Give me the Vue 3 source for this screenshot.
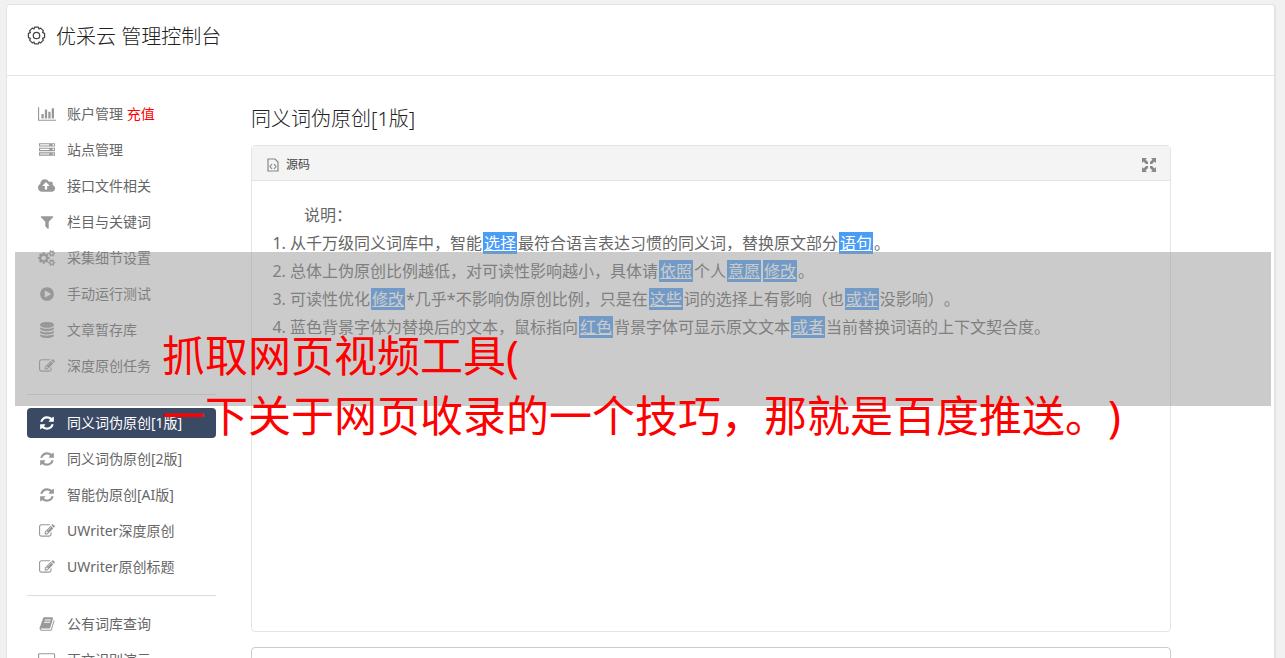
<script setup>
const icons = {
  chart: { w: 2048, d: 'M640 896v512h-256v-512h256zm384-512v1024h-256v-1024h256zm1024 1152v128h-2048v-1536h128v1408h1920zm-640-896v768h-256v-768h256zm384-384v1152h-256v-1152h256z' },
  server: { w: 1792, d: 'M128 1408h1024v-128h-1024v128zm0-512h1024v-128h-1024v128zm1568 448q0-40-28-68t-68-28-68 28-28 68 28 68 68 28 68-28 28-68zm-1568-960h1024v-128h-1024v128zm1568 448q0-40-28-68t-68-28-68 28-28 68 28 68 68 28 68-28 28-68zm0-512q0-40-28-68t-68-28-68 28-28 68 28 68 68 28 68-28 28-68zm96 832v384h-1792v-384h1792zm0-512v384h-1792v-384h1792zm0-512v384h-1792v-384h1792z' },
  cloud: { w: 1920, d: 'M1280 864q0-14-9-23l-352-352q-9-9-23-9t-23 9l-351 351q-10 12-10 24 0 14 9 23t23 9h224v352q0 13 9.5 22.5t22.5 9.5h192q13 0 22.5-9.5t9.5-22.5v-352h224q13 0 22.5-9.5t9.5-22.5zm640 288q0 159-112.5 271.5t-271.5 112.5h-1088q-185 0-316.5-131.5t-131.5-316.5q0-130 70-240t188-165q-2-30-2-43 0-212 150-362t362-150q156 0 285.5 87t188.5 231q71-62 166-62 106 0 181 75t75 181q0 76-41 138 130 31 213.5 135.5t83.5 238.5z' },
  filter: { w: 1792, d: 'M1595 295q17 41-14 70l-493 493v742q0 42-39 59-13 5-25 5-27 0-45-19l-256-256q-19-19-19-45v-486l-493-493q-31-29-14-70 17-39 59-39h1280q42 0 59 39z' },
  cogs: { w: 1920, d: 'M896 896q0-106-75-181t-181-75-181 75-75 181 75 181 181 75 181-75 75-181zm768 512q0-52-38-90t-90-38-90 38-38 90q0 53 37.5 90.5t90.5 37.5 90.5-37.5 37.5-90.5zm0-1024q0-52-38-90t-90-38-90 38-38 90q0 53 37.5 90.5t90.5 37.5 90.5-37.5 37.5-90.5zm-384 421v185q0 10-7 19.5t-16 10.5l-155 24q-11 35-32 76 34 48 90 115 7 11 7 20 0 12-7 19-23 30-82.5 89.5t-78.5 59.5q-11 0-21-7l-115-90q-37 19-77 31-11 108-23 155-7 24-30 24h-186q-11 0-20-7.5t-10-17.5l-23-153q-34-10-75-31l-118 89q-7 7-20 7-11 0-21-8-144-133-144-160 0-9 7-19 10-14 41-53t47-61q-23-44-35-82l-152-24q-10-1-17-9.500t-7-19.500v-185q0-10 7-19.500t16-10.500l155-24q11-35 32-76-34-48-90-115-7-11-7-20 0-12 7-20 22-30 82-89t79-59q11 0 21 7l115 90q34-18 77-32 11-108 23-154 7-24 30-24h186q11 0 20 7.500t10 17.500l23 153q34 10 75 31l118-89q8-7 20-7 11 0 21 8 144 133 144 160 0 8-7 19-12 16-42 54t-45 60q23 48 34 82l152 23q10 2 17 10.500t7 19.500zm640 533v140q0 16-149 31-12 27-30 52 51 113 51 138 0 4-4 7-122 71-124 71-8 0-46-47t-52-68q-20 2-30 2t-30-2q-14 21-52 68t-46 47q-2 0-124-71-4-3-4-7 0-25 51-138-18-25-30-52-149-15-149-31v-140q0-16 149-31 13-29 30-52-51-113-51-138 0-4 4-7 4-2 35-20t59-34 30-16q8 0 46 46.500t52 67.500q20-2 30-2t30 2q51-71 92-112l6-2q4 0 124 70 4 3 4 7 0 25-51 138 17 23 30 52 149 15 149 31zm0-1024v140q0 16-149 31-12 27-30 52 51 113 51 138 0 4-4 7-122 71-124 71-8 0-46-47t-52-68q-20 2-30 2t-30-2q-14 21-52 68t-46 47q-2 0-124-71-4-3-4-7 0-25 51-138-18-25-30-52-149-15-149-31v-140q0-16 149-31 13-29 30-52-51-113-51-138 0-4 4-7 4-2 35-20t59-34 30-16q8 0 46 46.500t52 67.500q20-2 30-2t30 2q51-71 92-112l6-2q4 0 124 70 4 3 4 7 0 25-51 138 17 23 30 52 149 15 149 31z' },
  play: { w: 1792, d: 'M896 128q209 0 385.500 103t279.500 279.500 103 385.500-103 385.500-279.500 279.500-385.500 103-385.500-103-279.500-279.500-103-385.500 103-385.500 279.500-279.500 385.500-103zm384 823q32-18 32-55t-32-55l-544-320q-31-19-64-1-32 19-32 56v640q0 37 32 56 16 8 32 8 17 0 32-9z' },
  database: { w: 1792, d: 'M896 768q237 0 443-43t325-127v170q0 69-103 128t-280 93.500-385 34.500-385-34.500-280-93.500-103-128v-170q119 84 325 127t443 43zm0 768q237 0 443-43t325-127v170q0 69-103 128t-280 93.500-385 34.500-385-34.500-280-93.500-103-128v-170q119 84 325 127t443 43zm0-384q237 0 443-43t325-127v170q0 69-103 128t-280 93.500-385 34.500-385-34.500-280-93.500-103-128v-170q119 84 325 127t443 43zm0-1152q208 0 385 34.500t280 93.500 103 128v128q0 69-103 128t-280 93.500-385 34.500-385-34.500-280-93.500-103-128v-128q0-69 103-128t280-93.500 385-34.500z' },
  edit: { w: 1792, d: 'M888 1184l116-116-152-152-116 116v56h96v96h56zm440-720q-16-16-33 1l-350 350q-17 17-1 33t33-1l350-350q17-17 1-33zm80 594v190q0 119-84.500 203.500t-203.500 84.500h-832q-119 0-203.500-84.500t-84.500-203.500v-832q0-119 84.500-203.500t203.500-84.500h832q63 0 117 25 15 7 18 23 3 17-9 29l-49 49q-14 14-32 8-23-6-45-6h-832q-66 0-113 47t-47 113v832q0 66 47 113t113 47h832q66 0 113-47t47-113v-126q0-13 9-22l64-64q15-15 35-7t20 29zm-96-738l288 288-672 672h-288v-288zm444 132l-92 92-288-288 92-92q28-28 68-28t68 28l152 152q28 28 28 68t-28 68z' },
  refresh: { w: 1792, d: 'M1639 1056q0 5-1 7-64 268-268 434.500t-478 166.500q-146 0-282.500-55t-243.500-157l-129 129q-19 19-45 19t-45-19-19-45v-448q0-26 19-45t45-19h448q26 0 45 19t19 45-19 45l-137 137q71 66 161 102t187 36q134 0 250-65t186-179q11-17 53-117 8-23 30-23h192q13 0 22.500 9.500t9.500 22.500zm25-800v448q0 26-19 45t-45 19h-448q-26 0-45-19t-19-45 19-45l138-138q-148-137-349-137-134 0-250 65t-186 179q-11 17-53 117-8 23-30 23h-199q-13 0-22.500-9.500t-9.500-22.500v-7q65-268 270-434.500t480-166.500q146 0 284 55.500t245 156.500l130-129q19-19 45-19t45 19 19 45z' },
  book: { w: 1792, d: 'M1703 478q40 57 18 129l-275 906q-19 64-76.500 107.500t-122.500 43.500h-923q-77 0-148.500-53.500t-99.500-131.500q-24-67-2-127 0-4 3-27t4-37q1-8-3-21.500t-3-19.500q2-11 8-21t16.500-23.500 16.500-23.500q23-38 45-91.500t30-91.500q3-10 .5-30t-.5-28q3-11 17-28t17-23q21-36 42-92t25-90q1-9-2.500-32t.5-28q4-13 22-30.500t22-22.500q19-26 42.500-84.500t27.500-96.500q1-8-3-25.500t-2-26.500q2-8 9-18t18-23 17-21q8-12 16.500-30.500t15-35 16-36 19.500-32 26.500-23.500 36-11.500 47.500 5.500l-1 3q38-9 51-9h761q74 0 114 56t18 130l-274 906q-36 119-71.500 153.500t-128.500 34.500h-869q-27 0-38 15-11 16-1 43 24 70 144 70h923q29 0 56-15.500t35-41.500l300-987q7-22 5-57 38 15 59 43zm-1064 2q-4 13 2 22.500t20 9.500h608q13 0 25.500-9.500t16.500-22.500l21-64q4-13-2-22.500t-20-9.500h-608q-13 0-25.500 9.500t-16.500 22.500zm-83 256q-4 13 2 22.500t20 9.500h608q13 0 25.500-9.500t16.500-22.500l21-64q4-13-2-22.500t-20-9.500h-608q-13 0-25.500 9.500t-16.500 22.500z' },
  screen: { w: 1920, d: 'M1792 1120v-832q0-13-9.500-22.500t-22.500-9.500h-1600q-13 0-22.500 9.500t-9.500 22.500v832q0 13 9.500 22.500t22.500 9.500h1600q13 0 22.500-9.500t9.500-22.500zm128-832v1088q0 66-47 113t-113 47h-1600q-66 0-113-47t-47-113v-1088q0-66 47-113t113-47h1600q66 0 113 47t47 113z' }
}

const groups = [
  [
    { icon: 'chart', label: '账户管理', extra: '充值' },
    { icon: 'server', label: '站点管理' },
    { icon: 'cloud', label: '接口文件相关' },
    { icon: 'filter', label: '栏目与关键词' },
    { icon: 'cogs', label: '采集细节设置' },
    { icon: 'play', label: '手动运行测试' },
    { icon: 'database', label: '文章暂存库' },
    { icon: 'edit', label: '深度原创任务' }
  ],
  [
    { icon: 'refresh', label: '同义词伪原创[1版]', active: true },
    { icon: 'refresh', label: '同义词伪原创[2版]' },
    { icon: 'refresh', label: '智能伪原创[AI版]' },
    { icon: 'edit', label: 'UWriter深度原创' },
    { icon: 'edit', label: 'UWriter原创标题' }
  ],
  [
    { icon: 'book', label: '公有词库查询' },
    { icon: 'screen', label: '正文识别演示' }
  ]
]

// Odd entries of each line are replaced words.
const lines = [
  ['从千万级同义词库中，智能', '选择', '最符合语言表达习惯的同义词，替换原文部分', '语句', '。'],
  ['总体上伪原创比例越低，对可读性影响越小，具体请', '依照', '个人', '意愿', '', '修改', '。'],
  ['可读性优化', '修改', '*几乎*不影响伪原创比例，只是在', '这些', '词的选择上有影响（也', '或许', '没影响）。'],
  ['蓝色背景字体为替换后的文本，鼠标指向', '红色', '背景字体可显示原文文本', '或者', '当前替换词语的上下文契合度。']
]
</script>

<template>
  <div class="page">
    <div class="shell">
      <header class="top">
        <svg class="gear" viewBox="0 0 20 20" aria-hidden="true">
          <path d="M8 1.200h4l.6 1.900 1.800-.9 2.900 2.900-.9 1.800 2.100.8v4.600l-2.100.8.9 1.800-2.900 2.900-1.800-.9-.6 1.900H8l-.6-1.900-1.800.9-2.900-2.900.9-1.800-2.100-.8V7.700l2.100-.8-.9-1.800 2.900-2.900 1.800.9z" />
          <circle cx="10" cy="10" r="3.400" />
        </svg>
        <h1>优采云 管理控制台</h1>
      </header>
      <div class="content">
        <nav class="side">
          <ul v-for="(group, g) in groups" :key="g">
            <li v-for="item in group" :key="item.label">
              <a href="#" :class="{ active: item.active }">
                <span class="ico">
                  <svg :viewBox="`0 0 ${icons[item.icon].w} 1792`" aria-hidden="true"><path :d="icons[item.icon].d" /></svg>
                </span>
                <span>{{ item.label }} <em v-if="item.extra">{{ item.extra }}</em></span>
              </a>
            </li>
          </ul>
        </nav>
        <main>
          <h2>同义词伪原创[1版]</h2>
          <section class="editor">
            <div class="toolbar">
              <button type="button">
                <svg class="source" viewBox="0 0 12 14" aria-hidden="true">
                  <path d="M1 1h7l3 3v9H1z" /><path d="M5 6L3 8.500 5 11M7 6l2 2.500L7 11" />
                </svg>
                源码
              </button>
              <button type="button" aria-label="全屏">
                <svg class="expand" viewBox="0 0 14 14" aria-hidden="true">
                  <path d="M0 0h5L3.500 1.500 6 4v2H4L1.500 3.500 0 5zM14 0v5l-1.500-1.500L10 6H8V4l2.500-2.500L9 0zM0 14V9l1.500 1.500L4 8h2v2l-2.500 2.500L5 14zM14 14H9l1.500-1.500L8 10V8h2l2.500 2.500L14 9z" />
                </svg>
              </button>
            </div>
            <div class="doc">
              <p>说明：</p>
              <ol>
                <li v-for="(line, i) in lines" :key="i"><template v-for="(part, j) in line" :key="j"><u v-if="j % 2">{{ part }}</u><template v-else>{{ part }}</template></template></li>
              </ol>
            </div>
          </section>
          <textarea aria-label="原文"></textarea>
        </main>
      </div>
    </div>
    <div class="banner">
      <p>抓取网页视频工具(<br />一下关于网页收录的一个技巧，那就是百度推送。)</p>
    </div>
  </div>
</template>

<style>
body {
  margin: 0;
  background: #f1f1f1;
}
</style>

<style scoped>
.page {
  position: relative;
  height: 100vh;
  overflow: hidden;
  box-sizing: border-box;
  padding: 4px 9px 0 6px;
  background: #f1f1f1;
  color: #666;
  font: 14px/30px "Noto Sans", "Noto Sans CJK SC", sans-serif;
  font-kerning: none;
  text-spacing-trim: space-all;
}
.shell {
  min-height: 100vh;
  background: #fff;
  border: 1px solid #e4e4e4;
  border-right-width: 2px;
  border-radius: 4px 4px 0 0;
}
.top {
  display: flex;
  align-items: center;
  gap: 10px;
  height: 60px;
  padding: 0 20px 10px;
  border-bottom: 1px solid #e4e4e4;
}
.gear {
  width: 19px;
  height: 19px;
  fill: none;
  stroke: #444;
  stroke-width: 1.3;
  stroke-linejoin: round;
}
h1,
h2 {
  margin: 0;
  color: #222;
  font-size: 20px;
  font-weight: 300;
  line-height: 30px;
}
h1 {
  padding-top: 3px;
}
.content {
  display: flex;
  gap: 35px;
  padding: 23px 103px 0 20px;
}
.side {
  flex: 0 0 189px;
}
ul {
  margin: 0;
  padding: 0;
  list-style: none;
}
ul + ul {
  margin-top: 13px;
  padding-top: 13px;
  border-top: 1px solid #dcdcdc;
}
ul li {
  margin-bottom: 6px;
}
.side a {
  display: flex;
  gap: 10px;
  height: 30px;
  padding: 0 10px;
  border-radius: 4px;
  color: #666;
  text-decoration: none;
  white-space: nowrap;
}
.side em {
  color: #f00;
  font-style: normal;
}
.side .active {
  background: #3a4964;
  color: #fff;
}
.ico {
  display: flex;
  flex: 0 0 20px;
  align-items: center;
  justify-content: center;
}
.ico svg {
  height: 16px;
  fill: #999;
}
.active .ico svg {
  fill: #fff;
}
main {
  flex: 1;
  min-width: 0;
  padding-top: 5px;
}
.editor {
  margin-top: 11px;
  border: 1px solid #e4e4e4;
  border-radius: 4px;
}
.toolbar {
  display: flex;
  justify-content: space-between;
  box-sizing: border-box;
  height: 35px;
  padding: 3px 13px 0 14px;
  background: #f4f4f4;
  border-bottom: 1px solid #e4e4e4;
}
button {
  display: flex;
  align-items: center;
  gap: 7px;
  padding: 0 1px;
  border: 0;
  background: none;
  color: #444;
  font: inherit;
  font-size: 12px;
}
.source {
  width: 12px;
  height: 14px;
  fill: none;
  stroke: #888;
  stroke-width: 1.2;
}
.expand {
  width: 14px;
  height: 14px;
  fill: #888;
}
.doc {
  min-height: 410px;
  padding: 20px;
  font-size: 16px;
  line-height: 28px;
}
.doc p {
  margin: 0;
  text-indent: 32px;
}
ol {
  margin: 0;
  padding: 0 0 0 18px;
}
u {
  margin: 0 1px;
  padding: 0 1px;
  background: #4a9df5;
  color: #fff;
}
textarea {
  display: block;
  box-sizing: border-box;
  width: 100%;
  height: 120px;
  margin-top: 15px;
  border: 1px solid #ccc;
  border-radius: 4px;
  resize: none;
}
.banner {
  position: absolute;
  top: 252px;
  right: 14px;
  left: 15px;
  height: 154px;
  background: rgba(151, 151, 151, 0.5);
}
.banner p {
  margin: 74px 0 0 147px;
  color: #f00;
  font-size: 43px;
  line-height: 60px;
  white-space: nowrap;
}
</style>
